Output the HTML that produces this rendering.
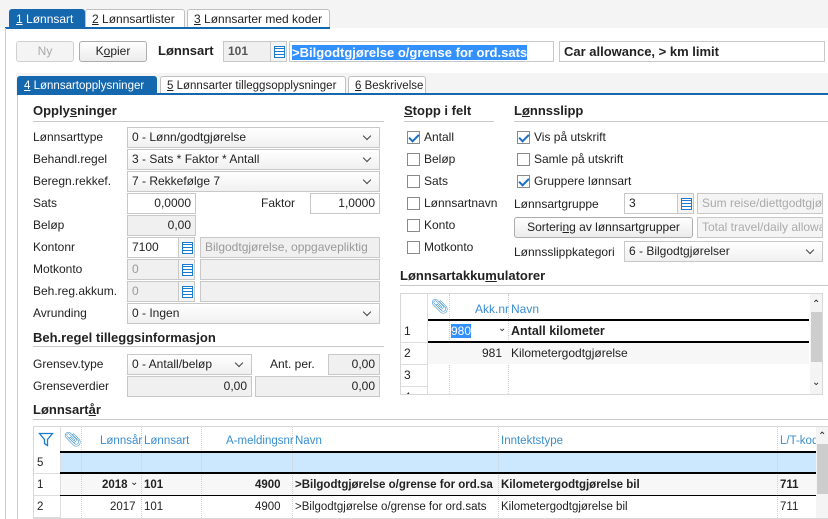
<!DOCTYPE html>
<html><head><meta charset="utf-8"><style>
*{box-sizing:border-box;margin:0;padding:0}
body{width:828px;height:519px;overflow:hidden;background:#fff;font-family:"Liberation Sans",sans-serif;font-size:12px;color:#222;position:relative}
.a{position:absolute;white-space:nowrap}
.t{position:absolute;white-space:nowrap;line-height:14px}
.f{position:absolute;border:1px solid #c8c8c8;background:#fff;height:21px;line-height:19px;padding:0 4px;white-space:nowrap;overflow:hidden}
.g{background:#f0f0f0;color:#999}
.r{text-align:right}
.sel{position:absolute;border:1px solid #c8c8c8;background:linear-gradient(#fff,#f0f0f0);height:21px;line-height:19px;padding:0 4px;white-space:nowrap}
.sel:after{content:"";position:absolute;right:9px;top:5px;width:5px;height:5px;border-right:1.3px solid #444;border-bottom:1.3px solid #444;transform:rotate(45deg)}
.ib{position:absolute;width:17px;height:21px;border:1px solid #c8c8c8;background:#f4f4f4}
.ib:after{content:"";position:absolute;left:3px;top:4px;width:9px;height:10px;border:1px solid #1a7bd0;background:repeating-linear-gradient(#fff 0 1px,#1a7bd0 1px 2px,#fff 2px 3px);}
.cb{position:absolute;width:13px;height:13px;border:1px solid #8a8a8a;background:#fff}
.cb.c:after{content:"";position:absolute;left:3px;top:0px;width:4px;height:8px;border-right:2px solid #1a6fc9;border-bottom:2px solid #1a6fc9;transform:rotate(45deg)}
.b{font-weight:bold}
.h{font-weight:bold;font-size:13px}
.ln{position:absolute;height:1px;background:#c8c8c8}
.btn{position:absolute;border:1px solid #adadad;border-radius:3px;background:linear-gradient(#fff,#ececec);text-align:center;height:21px;line-height:19px;white-space:nowrap}
.tab{position:absolute;height:19px;line-height:18px;padding-left:6px;background:#fff;border:1px solid #c0c0c0;border-bottom:none;border-radius:3px 3px 0 0;white-space:nowrap;overflow:hidden}
.tab.on{background:#1568ad;color:#fff;border-color:#1568ad}
.hd{color:#3a8fd0}
.vl{position:absolute;width:1px;border-left:1px dotted #d0d0d0}
u{text-decoration:underline}
</style></head><body>
<div class="a" style="left:0;top:0;width:828px;height:28px;background:#f4f4f4"></div>
<div class="tab on" style="left:9px;top:9px;width:76px"><u>1</u> Lønnsart</div>
<div class="tab" style="left:85px;top:9px;width:100px"><u>2</u> Lønnsartlister</div>
<div class="tab" style="left:187px;top:9px;width:143px"><u>3</u> Lønnsarter med koder</div>
<div class="a" style="left:5px;top:27px;width:325px;height:2px;background:#1568ad"></div>
<div class="a" style="left:5px;top:28px;width:1px;height:491px;background:#ccc"></div>

<div class="btn" style="left:16px;top:41px;width:58px;color:#aaa;background:#f4f4f4;border-color:#d0d0d0">Ny</div>
<div class="btn" style="left:79px;top:41px;width:68px">K<u>o</u>pier</div>
<div class="t" style="left:158px;top:44px;font-size:13px;font-weight:bold">Lønnsart</div>
<div class="f g" style="left:223px;top:41px;width:48px;color:#555;font-weight:bold">101</div>
<div class="ib" style="left:270px;top:41px"></div>
<div class="f" style="left:289px;top:41px;width:265px;padding:2px"><span style="background:#3390ff;color:#fff;font-weight:bold;line-height:15px;display:inline-block;font-size:13px">&gt;Bilgodtgjørelse o/grense for ord.sats</span></div>
<div class="f" style="left:559px;top:41px;width:266px;font-size:13px;font-weight:bold">Car allowance, &gt; km limit</div>

<div class="a" style="left:16px;top:73px;width:812px;height:22px;background:#f4f4f4"></div>
<div class="tab on" style="left:17px;top:76px;width:140px;font-size:11.5px"><u>4</u> Lønnsartopplysninger</div>
<div class="tab" style="left:160px;top:76px;width:186px;font-size:11.5px"><u>5</u> Lønnsarter tilleggsopplysninger</div>
<div class="tab" style="left:348px;top:76px;width:78px;font-size:11.5px"><u>6</u> Beskrivelse</div>
<div class="a" style="left:17px;top:93px;width:811px;height:2px;background:#1568ad"></div>
<div class="a" style="left:17px;top:95px;width:1px;height:424px;background:#ccc"></div>

<div class="t h" style="left:33px;top:104px">Opply<u>s</u>ninger</div>
<div class="ln" style="left:33px;top:121px;width:351px"></div>
<div class="t" style="left:33px;top:130px">Lønnsarttype</div><div class="sel" style="left:127px;top:127px;width:253px">0 - Lønn/godtgjørelse</div>
<div class="t" style="left:33px;top:152px">Behandl.regel</div><div class="sel" style="left:127px;top:149px;width:253px">3 - Sats * Faktor * Antall</div>
<div class="t" style="left:33px;top:174px">Beregn.rekkef.</div><div class="sel" style="left:127px;top:171px;width:253px">7 - Rekkefølge 7</div>
<div class="t" style="left:33px;top:196px">Sats</div><div class="f r" style="left:127px;top:193px;width:69px">0,0000</div>
<div class="t" style="left:261px;top:196px">Faktor</div><div class="f r" style="left:310px;top:193px;width:70px">1,0000</div>
<div class="t" style="left:33px;top:218px">Beløp</div><div class="f r" style="left:127px;top:215px;width:69px;background:#f0f0f0">0,00</div>
<div class="t" style="left:33px;top:240px">Kontonr</div><div class="f" style="left:127px;top:237px;width:52px">7100</div><div class="ib" style="left:178px;top:237px"></div><div class="f g" style="left:200px;top:237px;width:180px">Bilgodtgjørelse, oppgavepliktig</div>
<div class="t" style="left:33px;top:262px">Motkonto</div><div class="f g" style="left:127px;top:259px;width:52px">0</div><div class="ib" style="left:178px;top:259px"></div><div class="f g" style="left:200px;top:259px;width:180px"></div>
<div class="t" style="left:33px;top:284px">Beh.reg.akkum.</div><div class="f g" style="left:127px;top:281px;width:52px">0</div><div class="ib" style="left:178px;top:281px"></div><div class="f g" style="left:200px;top:281px;width:180px"></div>
<div class="t" style="left:33px;top:306px">Avrunding</div><div class="sel" style="left:127px;top:303px;width:253px">0 - Ingen</div>
<div class="t h" style="left:33px;top:331px">Beh.re<u>g</u>el tilleggsinformasjon</div>
<div class="ln" style="left:33px;top:346px;width:351px"></div>
<div class="t" style="left:33px;top:357px">Grensev.type</div><div class="sel" style="left:127px;top:354px;width:125px">0 - Antall/beløp</div>
<div class="t" style="left:270px;top:357px">Ant. per.</div><div class="f r" style="left:328px;top:354px;width:52px;background:#f0f0f0">0,00</div>
<div class="t" style="left:33px;top:379px">Grenseverdier</div><div class="f r" style="left:127px;top:376px;width:125px;background:#f0f0f0">0,00</div><div class="f r" style="left:255px;top:376px;width:125px;background:#f0f0f0">0,00</div>

<div class="t h" style="left:404px;top:104px"><u>S</u>topp i felt</div>
<div class="ln" style="left:404px;top:121px;width:90px"></div>
<div class="cb c" style="left:407px;top:131px"></div><div class="t" style="left:424px;top:130px">Antall</div>
<div class="cb" style="left:407px;top:153px"></div><div class="t" style="left:424px;top:152px">Beløp</div>
<div class="cb" style="left:407px;top:175px"></div><div class="t" style="left:424px;top:174px">Sats</div>
<div class="cb" style="left:407px;top:197px"></div><div class="t" style="left:424px;top:196px">Lønnsartnavn</div>
<div class="cb" style="left:407px;top:219px"></div><div class="t" style="left:424px;top:218px">Konto</div>
<div class="cb" style="left:407px;top:241px"></div><div class="t" style="left:424px;top:240px">Motkonto</div>

<div class="t h" style="left:514px;top:104px">L<u>ø</u>nnsslipp</div>
<div class="ln" style="left:514px;top:121px;width:314px"></div>
<div class="cb c" style="left:517px;top:131px"></div><div class="t" style="left:534px;top:130px">Vis på utskrift</div>
<div class="cb" style="left:517px;top:153px"></div><div class="t" style="left:534px;top:152px">Samle på utskrift</div>
<div class="cb c" style="left:517px;top:175px"></div><div class="t" style="left:534px;top:174px">Gruppere lønnsart</div>
<div class="t" style="left:514px;top:197px">Lønnsartgruppe</div><div class="f" style="left:624px;top:193px;width:54px">3</div><div class="ib" style="left:677px;top:193px"></div>
<div class="f g" style="left:697px;top:193px;width:126px;background:#f4f4f4;color:#aaa">Sum reise/diettgodtgjør</div>
<div class="btn" style="left:514px;top:217px;width:179px">Sorteri<u>ng</u> av lønnsartgrupper</div>
<div class="f g" style="left:697px;top:217px;width:126px;background:#f4f4f4;color:#aaa">Total travel/daily allowa</div>
<div class="t" style="left:514px;top:245px">Lønnsslippkategori</div><div class="sel" style="left:624px;top:241px;width:199px">6 - Bilgodtgjørelser</div>

<div class="t h" style="left:400px;top:269px">Lønnsartakku<u>m</u>ulatorer</div>
<div class="ln" style="left:400px;top:285px;width:428px"></div>
<div class="a" style="left:400px;top:293px;width:423px;height:102px;border:1px solid #d8d8d8;overflow:hidden">
 <div class="vl" style="left:26px;top:0;height:102px;border-left:1px solid #ddd"></div>
 <div class="vl" style="left:48px;top:0;height:102px"></div>
 <div class="vl" style="left:107px;top:0;height:102px"></div>
 <div class="t hd" style="left:30px;top:5px;font-size:14px">&#x1F4CE;&#xFE0E;</div>
 <div class="t hd" style="left:74px;top:8px">Akk.nr</div><div class="t hd" style="left:110px;top:8px">Navn</div>
 <div class="a" style="left:27px;top:25px;width:381px;height:2px;background:#000"></div>
 <div class="t" style="left:3px;top:30px">1</div>
 <div class="t" style="left:50px;top:30px;background:#3390ff;color:#fff">980</div>
 <div class="t" style="left:97px;top:28px;font-size:10px">&#8964;</div>
 <div class="t b" style="left:110px;top:30px;font-size:12.5px">Antall kilometer</div>
 <div class="a" style="left:27px;top:47px;width:381px;height:2px;background:#000"></div>
 <div class="a" style="left:27px;top:49px;width:381px;height:21px;background:#f7f7f7"></div>
 <div class="t" style="left:3px;top:52px">2</div><div class="t" style="left:81px;top:52px">981</div><div class="t" style="left:110px;top:52px">Kilometergodtgjørelse</div>
 <div class="ln" style="left:0;top:48px;width:26px;background:#ddd"></div>
 <div class="ln" style="left:0;top:70px;width:26px;background:#ddd"></div>
 <div class="ln" style="left:0;top:92px;width:26px;background:#ddd"></div>
 <div class="t" style="left:3px;top:74px">3</div><div class="t" style="left:3px;top:96px">4</div>
 <div class="a" style="left:409px;top:0;width:14px;height:102px;background:#f4f4f4"></div>
 <div class="a" style="left:410px;top:18px;width:13px;height:50px;background:#cdcdcd"></div>
 <div class="t" style="left:411px;top:4px;font-size:10px">&#8963;</div>
 <div class="t" style="left:411px;top:82px;font-size:10px">&#8964;</div>
</div>

<div class="t h" style="left:33px;top:403px">Lønnsart<u>å</u>r</div>
<div class="ln" style="left:33px;top:419px;width:795px"></div>
<div class="a" style="left:33px;top:426px;width:795px;height:93px;border:1px solid #d8d8d8;border-right:none;overflow:hidden">
 <div class="a" style="left:26px;top:25px;width:756px;height:20px;background:#cce8ff"></div>
 <div class="a" style="left:26px;top:47px;width:756px;height:21px;background:#f7f7f7"></div>
 <div class="vl" style="left:26px;top:0;height:93px;border-left:1px solid #ddd"></div>
 <div class="vl" style="left:47px;top:0;height:93px"></div>
 <div class="vl" style="left:107px;top:0;height:93px"></div>
 <div class="vl" style="left:167px;top:0;height:93px"></div>
 <div class="vl" style="left:258px;top:0;height:93px"></div>
 <div class="vl" style="left:464px;top:0;height:93px"></div>
 <div class="vl" style="left:743px;top:0;height:93px"></div>
 <svg class="a" style="left:4px;top:4px" width="16" height="16" viewBox="0 0 16 16"><path d="M1.5 2.5h13l-5 6v6l-3-2v-4z" fill="none" stroke="#1a7bd0" stroke-width="1.3"/></svg>
 <div class="t hd" style="left:30px;top:5px;font-size:14px">&#x1F4CE;&#xFE0E;</div>
 <div class="t hd" style="left:66px;top:7px;font-size:11.5px">Lønnsår</div>
 <div class="t hd" style="left:110px;top:7px;font-size:11.5px">Lønnsart</div>
 <div class="t hd" style="left:192px;top:7px;font-size:11.5px">A-meldingsnr</div>
 <div class="t hd" style="left:261px;top:7px;font-size:11.5px">Navn</div>
 <div class="t hd" style="left:467px;top:7px;font-size:11.5px">Inntektstype</div>
 <div class="t hd" style="left:746px;top:7px;font-size:11.5px">L/T-kod</div>
 <div class="a" style="left:26px;top:24px;width:756px;height:2px;background:#000"></div>
 <div class="a" style="left:26px;top:45px;width:756px;height:2px;background:#000"></div>
 <div class="a" style="left:26px;top:68px;width:756px;height:1px;background:#000"></div>
 <div class="ln" style="left:0;top:46px;width:26px;background:#ddd"></div>
 <div class="ln" style="left:0;top:68px;width:26px;background:#ddd"></div>
 <div class="ln" style="left:0;top:90px;width:26px;background:#ddd"></div>
 <div class="t" style="left:3px;top:29px;font-size:11.5px">5</div>
 <div class="t" style="left:3px;top:51px;font-size:11.5px">1</div>
 <div class="t b" style="left:68px;top:51px;font-size:11.5px">2018</div><div class="t" style="left:96px;top:49px;font-size:10px">&#8964;</div>
 <div class="t b" style="left:110px;top:51px;font-size:11.5px">101</div>
 <div class="t b" style="left:221px;top:51px;font-size:11.5px">4900</div>
 <div class="t b" style="left:261px;top:51px;font-size:11.5px">&gt;Bilgodtgjørelse o/grense for ord.sa</div>
 <div class="t b" style="left:467px;top:51px;font-size:11.5px">Kilometergodtgjørelse bil</div>
 <div class="t b" style="left:746px;top:51px;font-size:11.5px">711</div>
 <div class="t" style="left:3px;top:73px;font-size:11.5px">2</div>
 <div class="t" style="left:76px;top:73px;font-size:11.5px">2017</div>
 <div class="t" style="left:110px;top:73px;font-size:11.5px">101</div>
 <div class="t" style="left:221px;top:73px;font-size:11.5px">4900</div>
 <div class="t" style="left:261px;top:73px;font-size:11.5px">&gt;Bilgodtgjørelse o/grense for ord.sats</div>
 <div class="t" style="left:467px;top:73px;font-size:11.5px">Kilometergodtgjørelse bil</div>
 <div class="t" style="left:746px;top:73px;font-size:11.5px">711</div>
 <div class="a" style="left:782px;top:0;width:13px;height:93px;background:#f4f4f4"></div>
 <div class="a" style="left:783px;top:17px;width:12px;height:50px;background:#cdcdcd"></div>
 <div class="t" style="left:784px;top:3px;font-size:10px">&#8963;</div>
</div>
</body></html>
